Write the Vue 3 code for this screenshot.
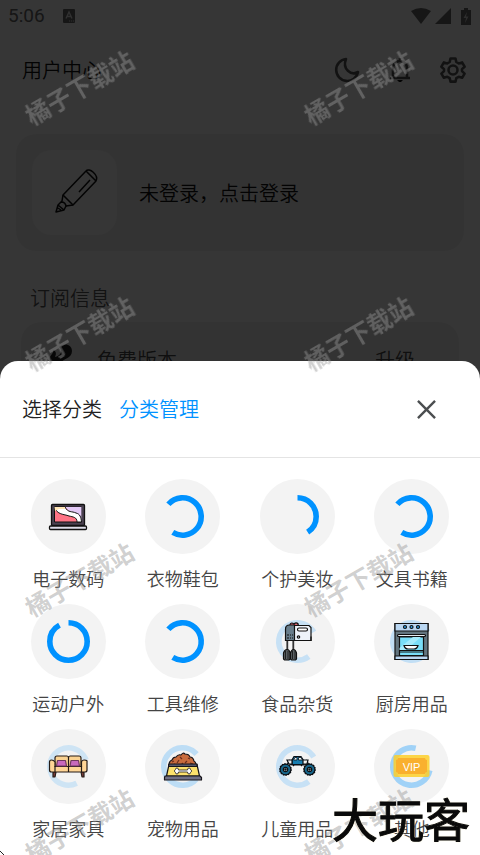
<template>
  <div class="page">
    <div class="status-bar">
      <span class="time">5:06</span>
      <svg class="status-app" viewBox="0 0 12 14" aria-hidden="true">
        <rect width="12" height="14" rx="1" fill="currentColor" />
        <path d="M3 9.500 6 3l3 6.500M4.200 7.500h3.600" fill="none" stroke="#ddd" stroke-width="1.400" />
        <path d="M6 12h1.200M8 12h1.200M10 12h1.200" stroke="#ddd" />
      </svg>
      <div class="status-right">
        <svg width="20" height="16" viewBox="0 0 20 16"><path d="M0 3Q10-3 20 3L10 16z" fill="currentColor" /></svg>
        <svg width="16" height="16" viewBox="0 0 16 16"><path d="M16 0v16H0z" fill="currentColor" /></svg>
        <svg class="battery" width="10" height="17" viewBox="0 0 10 17">
          <path d="M3 0h4v2h3v15H0V2h3z" fill="currentColor" />
          <path d="M6 4 2.500 10H5l-1 5 3.500-6.500H5z" fill="#ccc" />
        </svg>
      </div>
    </div>

    <header class="top">
      <h1>用户中心</h1>
      <nav class="actions">
        <button type="button" aria-label="深色模式">
          <svg viewBox="0 0 26 26"><path d="M12 2A11 11 0 1 0 24 15C17 19 8 12 12 2Z" /></svg>
        </button>
        <button type="button" aria-label="通知">
          <svg viewBox="0 0 26 26">
            <path d="M3 21h20M6 20V11a7 7 0 0 1 14 0v9M13 4V1" />
            <path d="M10 23h6l-2 2h-2z" fill="currentColor" stroke="none" />
          </svg>
        </button>
        <button type="button" aria-label="设置">
          <svg viewBox="0 0 26 26">
            <path d="M10.500 1.500h5l.8 3.500 2.400 1.400 3.400-1 2.500 4.300-2.600 2.400v2l2.600 2.500-2.500 4.200-3.400-1-2.400 1.400-.8 3.400h-5l-.8-3.400-2.400-1.400-3.400 1-2.500-4.200L4 14.100v-2L1.400 9.700l2.500-4.300 3.400 1L9.700 5z" />
            <circle cx="13" cy="13" r="4.500" />
          </svg>
        </button>
      </nav>
    </header>

    <section class="login-card">
      <div class="avatar">
        <svg viewBox="0 0 85 85">
          <path d="M54 21 31 45l10 10 23-24zM54 21c3-4 13 4 10 10M58 30 47 42" />
          <path d="M31 45l-1 6-4 4-2 7 8-2 2-4 7-1M26 55l6 5M29 52c3 0 5 2 5 5M26 58l3 2" />
        </svg>
      </div>
      <button type="button">未登录，点击登录</button>
    </section>

    <h2>订阅信息</h2>
    <section class="plan-card">
      <svg class="plan-icon" viewBox="0 0 24 32">
        <path d="M11 3c6-5 13-2 13 4 0 8-9 7-12 13-1 3 1 6 3 8C5 28 0 19 2 13c1-3 4-4 3-7 4 1 3 5 2 7 4-1 9-5 4-10z" />
      </svg>
      <span>免费版本</span>
      <button type="button">升级</button>
    </section>
  </div>

  <div class="mask">
    <div class="sheet" role="dialog" aria-modal="true" aria-labelledby="sheet-title">
      <header class="sheet-head">
        <h2 id="sheet-title">选择分类</h2>
        <a href="#">分类管理</a>
        <button type="button" aria-label="关闭">
          <svg viewBox="0 0 20 20"><path d="m1 1 18 18M19 1 1 19" /></svg>
        </button>
      </header>

      <div class="grid">
        <button v-for="item in categories" :key="item.name" type="button" class="category">
          <svg class="icon" viewBox="0 0 75 75" aria-hidden="true">
            <circle
              v-if="item.arc"
              class="ring"
              cx="37.500"
              cy="37.500"
              r="18.700"
              pathLength="360"
              :stroke-dasharray="`${item.arc[1]} 360`"
              :transform="`rotate(${item.arc[0] - 90} 37.5 37.5)`"
              :opacity="item.fade || 1"
            />

            <g v-if="item.icon === 'laptop'" stroke="#111" stroke-linejoin="round">
              <rect x="20.500" y="25.500" width="33" height="21" rx="1" fill="#4a4150" stroke-width="1.300" />
              <path d="M23.500 28h27v15h-27z" fill="#ff7486" />
              <path d="M34 28h16.500v14C47 34 43 36 39 33c-2-2-3-3-5-5z" fill="#e3c9f7" stroke="none" />
              <path d="M23.500 28H34c3 6 7 4 11 6 4 1 5 4 5.500 9H46c0-5-4-5-8-6-5-2-12-1-14.500-9z" fill="#fff" />
              <path d="M23.500 28H34v2h-6l-4 2z" fill="#ffe4b5" stroke="none" />
              <rect x="18.500" y="47" width="37" height="3.500" rx="1" fill="#dcdce8" stroke-width="1.300" />
            </g>

            <g v-else-if="item.icon === 'mixer'" stroke="#111" stroke-width="1.200">
              <path d="M30 21c0-3 3-2 4-1 2-2 5-1 4 2" fill="#df6473" />
              <path d="M34 21.500h15l2 2v13H34z" fill="#eef3fa" />
              <path d="M47 36.500h4v-4" fill="none" />
              <rect x="37.500" y="24" width="10" height="3" rx="1.500" fill="#fff" />
              <circle cx="38.500" cy="33" r="1.200" fill="#fff" />
              <path d="M25.500 36.500V25q0-4 4-4h5v15.500z" fill="#687d8b" />
              <path d="M27 31h2m1 0h1m1 0h1M27 34h2m1 0h1m1 0h1" />
              <path d="M27.300 37v9M33.300 37v9" stroke="#333" stroke-width="1.800" />
              <path d="M23.500 55V49q1-3.500 3.500-3.500t3 3.500V55l-1 1h-4.500zM30.500 55V49q1-3.500 3-3.500t3 3.500V55l-1 1h-4z" fill="#5b6265" />
              <path d="M25.500 47v8M28 47v8M32.500 47v8M35 47v8" stroke-width=".8" />
            </g>

            <g v-else-if="item.icon === 'oven'" stroke="#111" stroke-width="1.200">
              <path d="M21 19.500h33v36H21z" fill="#62747e" />
              <path d="M21 19.500h33V27H21zM21 52h33v3.500H21z" fill="#bad7f2" />
              <g fill="#2aa2ef">
                <circle cx="31" cy="23" r="1.500" />
                <circle cx="37.500" cy="23" r="1.500" />
                <circle cx="44" cy="23" r="1.500" />
              </g>
              <path d="M25.500 33h24v18.500h-24z" fill="#79def8" />
              <path d="m39 33 8 0-15 13h-6.500v-2z" fill="#a4ebfc" stroke="none" />
              <rect x="23.500" y="30.500" width="28" height="2" rx="1" fill="#e7edf3" />
              <path d="M30 41.500h14q-1 3.500-4 3.500h-6q-3 0-4-3.500z" fill="#fff" />
              <path d="M25.500 46.500h24M25.500 48h24" />
            </g>

            <g v-else-if="item.icon === 'sofa'" stroke="#241b16" stroke-width="1.200" stroke-linejoin="round">
              <path d="M22 43h3l-1 5h-2zM50 43h3v5h-2z" fill="#7c3d3b" />
              <path d="M24 38V29q0-2 2-2h10q1.500 0 1.500 2 0-2 1.500-2h9q2 0 2 2v9z" fill="#fad292" />
              <path d="M18.500 33q0-2 2-2t3.500 2v4.500h26.500V33q0-2 3-2t2.500 2v8q0 2-2 2H20.500q-2 0-2-2z" fill="#ffd596" />
              <path d="M24 37v6M50.500 37v6M37.500 29v14" fill="none" />
              <path d="M26.500 31.500h8l1 5.500h-10zM40 31.500h7.500l1 5.500h-9.500z" fill="#c969bd" stroke="#70385f" />
            </g>

            <g v-else-if="item.icon === 'bowl'" stroke="#17151a" stroke-width="1.200" stroke-linejoin="round">
              <path d="M24 36q0-4 3-5 1-3 4-3 2-3 5-2 2-3 4-1 4 0 5 3 3 0 4 4 2 1 2 4z" fill="#c86b3d" />
              <path d="m27 33 2-1m3 2 2-3m1-3 2 2m3 4 2-2m1-3 2 1m0 4 3 1m-12 1 2-2m-10 2 2-1" stroke="#6a2d1d" />
              <path d="M24 35.500h28L54.500 47H21.500z" fill="#fce16c" />
              <path d="M24 35h28v2.500H23.500z" fill="#58596c" />
              <path d="M20 47h35l1.500 1.500V51h-37v-2.500z" fill="#707085" />
              <path d="M33.500 41h9q0-2 1.500-2t1.500 1.500q1 .5 1 1.500t-1 1.500Q45.500 45 44 45t-1.500-2h-9q0 2-1.500 2t-1.500-1.500q-1-.5-1-1.500t1-1.500Q30.500 39 32 39t1.500 2z" fill="#fff" stroke-width=".8" />
            </g>

            <g v-else-if="item.icon === 'truck'" stroke="#0b1015" stroke-width="1.200">
              <path d="m27 34 5 2 12 0 5-2M29 31l5 6M47 31l-6 6" fill="none" />
              <path d="M32 35.500V31l2-3.500h7l2.500 4v4z" fill="#177cae" />
              <path d="M33.500 31l1.500-2.500h2V31zM38.500 28.500H41l1.500 2.500h-4z" fill="#eef6fa" stroke-width=".8" />
              <path d="M27 31h5v4h-3zM43 31h5l-1 4h-4z" fill="#eee" />
              <g v-for="x in [25.5, 49.5]" :key="x">
                <circle :cx="x" cy="40.500" r="5.400" fill="#17668b" />
                <circle :cx="x" cy="40.500" r="5.700" fill="none" stroke-dasharray="1.200 1.300" stroke-width="1.500" />
                <circle :cx="x" cy="40.500" r="2.200" fill="#ecf2f5" />
                <circle :cx="x" cy="40.500" r=".7" />
              </g>
            </g>

            <g v-else-if="item.icon === 'vip'">
              <rect x="19.500" y="26" width="36" height="22" rx="2" fill="#fece22" fill-opacity=".82" />
              <path d="M24 29h27q0 2 2 2v12q-2 0-2 2H24q0-2-2-2V31q2 0 2-2z" fill="#f9b02e" />
              <text x="37.500" y="42" class="vip">VIP</text>
            </g>
          </svg>
          <span>{{ item.name }}</span>
        </button>
      </div>
    </div>
  </div>

  <div class="watermarks" aria-hidden="true">
    <span v-for="n in 8" :key="n">橘子下载站</span>
  </div>
  <div class="brand">大玩客</div>
  <svg class="corner" viewBox="0 0 4 4" aria-hidden="true"><path d="M0 0l4 4" /></svg>
</template>

<script setup>
// arc: [起始角度, 弧长]，从12点方向顺时针
const categories = [
  { name: '电子数码', icon: 'laptop' },
  { name: '衣物鞋包', arc: [311, 260] },
  { name: '个护美妆', arc: [0, 147] },
  { name: '文具书籍', arc: [311, 260] },
  { name: '运动户外', arc: [0, 331] },
  { name: '工具维修', arc: [311, 260] },
  { name: '食品杂货', icon: 'mixer', arc: [143, 277], fade: 0.18 },
  { name: '厨房用品', icon: 'oven', arc: [143, 277], fade: 0.2 },
  { name: '家居家具', icon: 'sofa', arc: [154, 276], fade: 0.15 },
  { name: '宠物用品', icon: 'bowl', arc: [132, 277], fade: 0.22 },
  { name: '儿童用品', icon: 'truck', arc: [143, 277], fade: 0.18 },
  { name: '其他', icon: 'vip', arc: [102, 271], fade: 0.34 }
]
</script>

<style>
body {
  margin: 0;
  background: #f7f7f7;
  font-family: 'Noto Sans CJK SC', sans-serif;
  font-weight: 350;
}
</style>

<style scoped>
button {
  padding: 0;
  border: 0;
  background: none;
  color: inherit;
  font: inherit;
  cursor: pointer;
}

h1,
h2 {
  margin: 0;
  font-size: 20px;
  font-weight: inherit;
  line-height: 28px;
}

svg {
  display: block;
}

.page {
  color: #111;
  font-size: 20px;
  line-height: 28px;
}

/* 状态栏 */
.status-bar {
  display: flex;
  align-items: center;
  height: 32px;
  padding: 0 9px 0 8px;
  color: #636363;
}

.time {
  font-family: Roboto, sans-serif;
  font-size: 19px;
  font-weight: 400;
}

.status-app {
  width: 12px;
  height: 14px;
  margin-left: 18px;
}

.status-right {
  display: flex;
  align-items: center;
  gap: 4px;
  margin-left: auto;
}

.battery {
  margin-left: 6px;
}

.top {
  display: flex;
  align-items: center;
  justify-content: space-between;
  height: 76px;
  padding: 0 14px 0 22px;
}

.actions {
  display: flex;
  gap: 27px;
}

.actions svg {
  width: 26px;
  height: 26px;
  fill: none;
  stroke: #555;
  stroke-width: 2.6;
  stroke-linejoin: round;
}

.login-card {
  display: flex;
  align-items: center;
  gap: 22px;
  margin: 26px 16px 33px;
  padding: 16px;
  border-radius: 20px;
  background: #e9e9e9;
}

.avatar {
  width: 85px;
  height: 85px;
  border-radius: 20px;
  background: #f4f4f4;
}

.avatar path {
  fill: none;
  stroke: #111;
  stroke-width: 1.5;
  stroke-linejoin: round;
}

.page > h2 {
  padding-left: 30px;
  color: #555;
}

.plan-card {
  display: flex;
  align-items: center;
  margin: 10px 21px 0;
  padding: 22px 44px 22px 27px;
  border-radius: 20px;
  background: #e9e9e9;
  color: #444;
}

.plan-icon {
  width: 24px;
  height: 32px;
  margin-right: 25px;
  fill: #222;
}

.plan-card button {
  margin-left: auto;
}

/* 底部弹窗 */
.mask {
  position: fixed;
  inset: 0;
  display: flex;
  align-items: flex-end;
  background: rgba(0, 0, 0, 0.78);
}

.sheet {
  width: 100%;
  border-radius: 18px 18px 0 0;
  background: #fff;
}

.sheet-head {
  display: flex;
  align-items: center;
  gap: 17px;
  height: 96px;
  padding: 0 44px 0 22px;
  border-bottom: 1px solid #e4e4e4;
  color: #222;
  font-size: 20px;
}

.sheet-head a {
  color: #0092ff;
  line-height: 28px;
  text-decoration: none;
}

.sheet-head button {
  margin-left: auto;
}

.sheet-head svg {
  width: 19px;
  height: 19px;
  fill: none;
  stroke: #4b4e50;
  stroke-width: 2.5;
}

.grid {
  display: grid;
  grid-template-columns: repeat(4, 1fr);
  row-gap: 14px;
  padding: 21px 11px 15px;
}

.category {
  display: flex;
  flex-direction: column;
  align-items: center;
  gap: 12px;
  color: #444;
  font-size: 18px;
  line-height: 24px;
}

.icon {
  width: 75px;
  height: 75px;
  border-radius: 50%;
  background: #f3f3f3;
}

.ring {
  fill: none;
  stroke: #0092ff;
  stroke-width: 5.6;
}

.vip {
  fill: #fff;
  font-family: 'Liberation Sans', sans-serif;
  font-size: 11px;
  text-anchor: middle;
}

/* 水印 */
.watermarks {
  position: fixed;
  top: -36px;
  left: -61px;
  display: grid;
  grid-template-columns: repeat(2, 279px);
  grid-auto-rows: 246px;
  place-items: center;
  color: rgba(150, 150, 150, 0.45);
  font-size: 24px;
  font-weight: 700;
  line-height: 28px;
  pointer-events: none;
}

.watermarks span {
  transform: rotate(-30deg);
}

.brand {
  position: fixed;
  right: 10px;
  bottom: 11px;
  color: #0a0a0a;
  font-size: 46px;
  font-weight: 400;
  line-height: 54px;
  -webkit-text-stroke: 1px #0a0a0a;
  text-shadow: 0 0 2px #f5efd5, 0 0 2px #f5efd5;
  pointer-events: none;
}

.corner {
  position: fixed;
  left: 0;
  bottom: 0;
  width: 4px;
  height: 4px;
  stroke: #222;
}
</style>
